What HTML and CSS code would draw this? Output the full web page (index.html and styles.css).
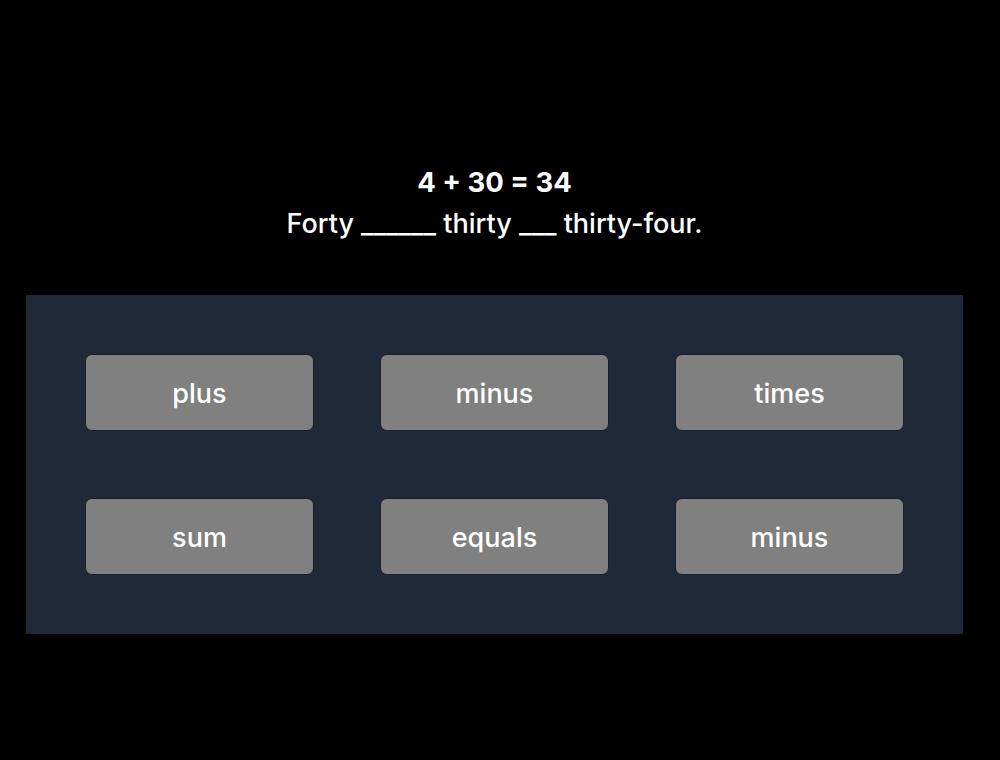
FILE: index.html
```html
<!DOCTYPE html>
<html>
<head>
<meta charset="utf-8">
<link rel="stylesheet" href="styles.css">
</head>
<body>
<div class="page">
  <div class="question">
    <div class="equation">4 + 30 = 34</div>
    <div class="sentence">Forty ______ thirty ___ thirty-four.</div>
  </div>
  <div class="panel">
    <button class="choice">plus</button>
    <button class="choice">minus</button>
    <button class="choice">times</button>
    <button class="choice">sum</button>
    <button class="choice">equals</button>
    <button class="choice">minus</button>
  </div>
</div>
</body>
</html>
```

FILE: styles.css
```css
html, body {
  margin: 0;
  padding: 0;
  background: #000;
  height: 100%;
}
body {
  font-family: Inter, "Noto Sans", sans-serif;
  color: #fff;
}
.page {
  width: 937px;
  margin-left: 26px;
  padding-top: 166px;
}
.question {
  text-align: center;
  height: 129px;
}
.equation {
  font-size: 27.5px;
  font-weight: 700;
  line-height: 32px;
}
.sentence {
  font-size: 27px;
  font-weight: 500;
  line-height: 32px;
  margin-top: 10px;
}
.panel {
  background: #1f2937;
  padding: 59px;
  display: grid;
  grid-template-columns: repeat(3, 229px);
  grid-auto-rows: 77px;
  column-gap: 66px;
  row-gap: 67px;
}
.choice {
  box-sizing: border-box;
  background: #808080;
  border: 1px solid #18202c;
  border-radius: 7px;
  color: #fff;
  font-family: Inter, "Noto Sans", sans-serif;
  font-size: 27px;
  font-weight: 500;
  padding: 2px 0 0;
}
```
